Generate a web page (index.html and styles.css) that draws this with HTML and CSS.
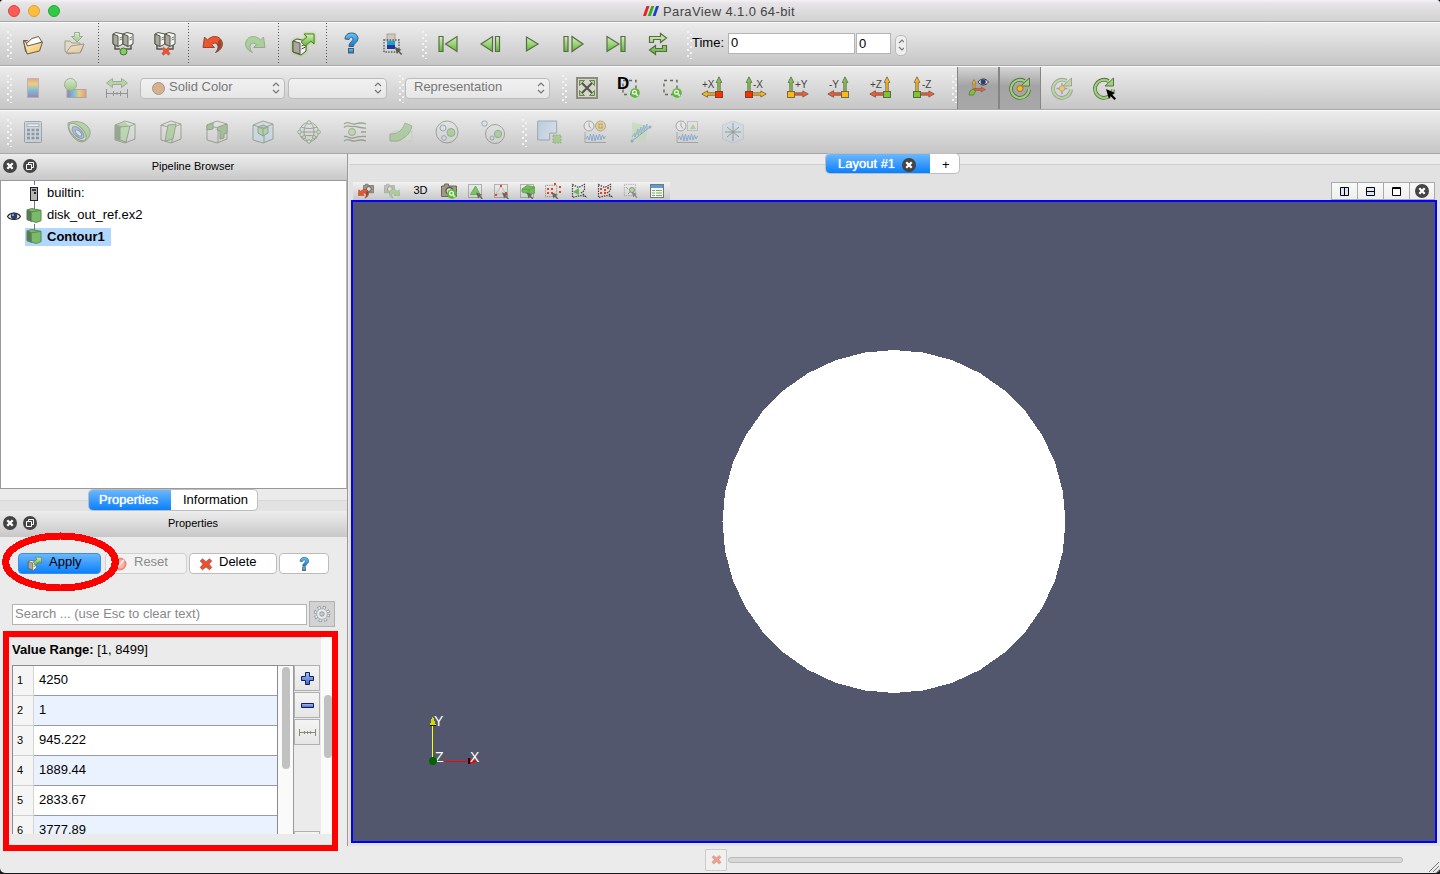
FILE: index.html
```html
<!DOCTYPE html>
<html lang="en">
<head>
<meta charset="utf-8">
<title>ParaView 4.1.0 64-bit</title>
<link rel="stylesheet" href="styles.css">
</head>
<body>
<svg class="defs" width="0" height="0">
  <defs>
    <linearGradient id="gGreen" x1="0" y1="0" x2="0" y2="1"><stop offset="0" stop-color="#d3f0bd"/><stop offset="1" stop-color="#5fb92f"/></linearGradient>
    <linearGradient id="gRain" x1="0" y1="0" x2="0" y2="1"><stop offset="0" stop-color="#f2603a"/><stop offset=".3" stop-color="#f8c72d"/><stop offset=".6" stop-color="#2ba7d8"/><stop offset="1" stop-color="#5c38a8"/></linearGradient>
    <linearGradient id="gRainH" x1="0" y1="0" x2="1" y2="0"><stop offset="0" stop-color="#4a30a0"/><stop offset=".35" stop-color="#2ba7d8"/><stop offset=".65" stop-color="#f8c72d"/><stop offset="1" stop-color="#f2603a"/></linearGradient>
    <linearGradient id="gBlue" x1="0" y1="0" x2="0" y2="1"><stop offset="0" stop-color="#62c6ff"/><stop offset="1" stop-color="#0a78d6"/></linearGradient>
    <linearGradient id="gFold" x1="0" y1="0" x2="1" y2="1"><stop offset="0" stop-color="#fff3cf"/><stop offset="1" stop-color="#f2bd5c"/></linearGradient>
    <linearGradient id="gPane" x1="0" y1="0" x2="1" y2="1"><stop offset="0" stop-color="#8fb8e0"/><stop offset="1" stop-color="#e3edf5"/></linearGradient>
    <linearGradient id="gPlus" x1="0" y1="0" x2="0" y2="1"><stop offset="0" stop-color="#a9c4f3"/><stop offset="1" stop-color="#4468c0"/></linearGradient>
    <symbol id="folder" viewBox="0 0 24 24"><path d="M2.500 8.500h4l2 2 11 1-1 7-12 3-2-2z" fill="#e8c585" stroke="#6a604a"/><path d="M5 12l6-5.500 6.500-2L21 10l-13 5z" fill="#fff" stroke="#6a604a"/><path d="M2.500 9l2 .500 2 4.500 15-4-3 9-12.500 3z" fill="url(#gFold)" stroke="#6a604a"/></symbol>
    <symbol id="folderSave" viewBox="0 0 24 24"><path d="M2 9h5l2 2 8 0 0 2 4-1-3 8-13 2-3-3z" fill="#ecd9b5" stroke="#6a604a"/><path d="M3 21l5-7 13-2-4 9z" fill="url(#gFold)" stroke="#6a604a"/><path d="M11.500 .500h5v4h3l-5.500 5.500-5.500-5.500h3z" fill="url(#gGreen)" stroke="#5a7a4a"/></symbol>
    <symbol id="servers" viewBox="0 0 24 24"><path d="M4 12v6h5M20 12v6h-5" fill="none" stroke="#55564a" stroke-width="1.500"/><g stroke="#55564a"><path d="M2 3l3-1.500 7 1.500v10l-5 2.500-5-2.500z" fill="#f4f4f2"/><path d="M2 3l5 2v10.500l-5-2.500z" fill="#a8a89c"/><path d="M12 3l4-1.500 6 1.500v10l-5 2.500-5-2.500z" fill="#f4f4f2"/><path d="M12 3l5 2v10.500l-5-2.500z" fill="#a8a89c"/><path d="M8.500 7l2.500-1M8.500 9l2.500-1M18.500 7l2.500-1M18.500 9l2.500-1" stroke="#555" stroke-width=".8"/></g></symbol>
    <symbol id="undo" viewBox="0 0 24 24"><path d="M2 15.500L3.500 5l3 3c4-4.500 10-4.500 13-1 4 5 1.500 11-5 13.500 2.500-3 3.500-6 1.500-8.500-1.500-1.500-3.500-1-5.500.500l3 3z" fill="#f0532d" stroke="#8b4a36"/><path d="M18.500 7c4 4 2 10.500-4 13.500 2.500-3 3.500-6 1.500-8.500z" fill="#4d4038" opacity=".55"/></symbol>
    <symbol id="redo" viewBox="0 0 24 24"><path d="M22 15.500L20.500 5l-3 3c-4-4.500-10-4.500-13-1-4 5-1.500 11 5 13.500C7 17.500 6 14.500 8 12c1.500-1.500 3.500-1 5.500.500l-3 3z" fill="#7cc65a" stroke="#5a7a4a"/></symbol>
    <symbol id="help" viewBox="0 0 24 24"><path d="M6 8c0-4 3-6 6.500-6C16 2 19 4 19 7.500c0 4-4.500 4.500-4.500 8h-4.500c0-5 4-5 4-7.500 0-2.500-3.500-2.500-4 .500z" fill="url(#gBlue)" stroke="#4a5a62"/><rect x="9.500" y="17.500" width="5" height="4.500" fill="url(#gBlue)" stroke="#4a5a62"/></symbol>
    <symbol id="cross" viewBox="0 0 24 24"><path d="M6 3l6 5 6-5 4 4-5 5 5 6-4 4-6-5-6 5-4-4 5-6-5-5z" fill="#ee5131" stroke="#8b3a26"/></symbol>
    <symbol id="cursor" viewBox="0 0 12 12"><path d="M1 1l9 4-3 1.500 4 4-1.500 1.500-4-4L4 11z"/></symbol>
    <symbol id="up" viewBox="0 0 10 22"><path d="M3.500 21V8H1.500L5 1l3.500 7H6.500v13z" stroke="#6a6a4e"/></symbol>
    <symbol id="rightArr" viewBox="0 0 22 10"><path d="M1 3.500h13V1l7 4-7 4V6.500H1z" stroke="#6a5a4a"/></symbol>
    <symbol id="leftArr" viewBox="0 0 22 10"><path d="M21 3.500H8V1L1 5l7 4V6.500h13z" stroke="#6a5a4a"/></symbol>
    <symbol id="wire" viewBox="0 0 24 24"><path d="M2 5l10-4 10 3v15l-10 4L2 20zM2 5l11 3 9-4M13 8v15" fill="none" stroke="#5c6a50"/></symbol>
    <symbol id="rotate" viewBox="0 0 24 24"><path d="M16.500 5A9 9 0 1 0 21 13.500" fill="none" stroke="#5f7048" stroke-width="3.800"/><path d="M21.500 2v8h-8.500z" fill="#9bd37a" stroke="#5f7048"/><path d="M16.800 5.300A9 9 0 1 0 21 13" fill="none" stroke="#9bd37a" stroke-width="2"/></symbol>
    <symbol id="close" viewBox="0 0 14 14"><circle cx="7" cy="7" r="7" fill="#444"/><path d="M4.300 4.300l5.400 5.400M9.700 4.300l-5.400 5.400" stroke="#fff" stroke-width="2.300"/></symbol>
    <symbol id="float" viewBox="0 0 14 14"><circle cx="7" cy="7" r="7" fill="#444"/><path d="M5.500 5.500v-2h5v5h-2M3.500 5.500h5v5h-5z" fill="none" stroke="#fff"/></symbol>
    <symbol id="cube" viewBox="0 0 16 16"><path d="M.500 2l5-1.500 10 2v11l-5 2-10-3z" fill="#79bb68" stroke="#5b8450"/><path d="M.500 2l5 2v11l-5-2.500z" fill="#587a54"/><path d="M.500 2l5 2 10-1.500" fill="none" stroke="#5b8450"/></symbol>
    <symbol id="gmag" viewBox="0 0 10 10"><circle cx="5" cy="5" r="4.800" fill="#5cba38"/><circle cx="4.500" cy="4.300" r="1.900" fill="none" stroke="#fff" stroke-width="1.200"/><path d="M6 6l2 2" stroke="#fff" stroke-width="1.300"/></symbol>
    <symbol id="dash" viewBox="0 0 16 16"><rect x="1.500" y="1.500" width="13" height="13" fill="none" stroke="#77786a" stroke-dasharray="1 1"/></symbol>
    <symbol id="cam" viewBox="0 0 16 16"><path d="M.500 3h3V1h4v2h8v10.500H.500z" fill="#9c9a84" stroke="#6a685a"/><circle cx="8.500" cy="8" r="3.500" fill="#ddd" stroke="#5a584a" stroke-width="1.300"/></symbol>
    <symbol id="wave" viewBox="0 0 24 12"><path d="M2 0v10.500h21" fill="none" stroke="#7a7a70"/><path d="M3 7l1.500-3L6 8l1.500-6L9 9l1.500-7L12 9l1.500-6L15 8l1.500-6L18 8l1.500-5L21 7l1.500-3" fill="none" stroke="#3a84c8"/></symbol>
    <symbol id="clock" viewBox="0 0 12 12"><circle cx="6" cy="6" r="5" fill="#eee" stroke="#6a6a60"/><path d="M6 2.500V6l2 2.500" fill="none" stroke="#6a6a60"/></symbol>
    <symbol id="spin" viewBox="0 0 8 12"><path d="M1 4l3-3 3 3M1 8l3 3 3-3" fill="none" stroke="#777" stroke-width="1.200"/></symbol>
    <symbol id="applyBox" viewBox="0 0 24 24"><path d="M2 9l4-2 9 2v10l-5 4-8-3z" fill="#f2f2ee" stroke="#55564a"/><path d="M2 9l7 2v11l-7-2z" fill="#a8a89c" stroke="#55564a"/><path d="M10.500 14l4-2M10.500 17l4-2" stroke="#444"/><path d="M10 10l6-5-3-3h10v10l-3-3-6 5z" fill="url(#gGreen)" stroke="#5a7a3a"/></symbol>
  </defs>
</svg>

<div class="window">
  <header class="titlebar">
    <div class="lights"><i class="light red"></i><i class="light yellow"></i><i class="light green"></i></div>
    <div class="title"><svg width="16" height="12" viewBox="0 0 16 12"><path d="M0 11L3.500 1H6.500L3 11z" fill="#e8202a"/><path d="M4.800 11L8.300 1H11.300L7.800 11z" fill="#2fae1e"/><path d="M9.600 11L13.100 1H16L12.500 11z" fill="#1c3fd0"/></svg><span>ParaView 4.1.0 64-bit</span></div>
  </header>

  <div class="toolbar">
    <i class="grip"></i>
    <div class="cell"><svg class="ic"><use href="#folder"/></svg></div>
    <div class="cell off"><svg class="ic"><use href="#folderSave"/></svg></div>
    <i class="sep"></i>
    <div class="cell"><svg class="ic" viewBox="0 0 24 24"><use href="#servers" y="-1"/><circle cx="12.500" cy="19.500" r="3.500" fill="#7fd05c" stroke="#4c6a3e"/></svg></div>
    <div class="cell"><svg class="ic" viewBox="0 0 24 24"><use href="#servers" y="-1"/><use href="#cross" x="8" y="14" width="10" height="10"/></svg></div>
    <i class="sep"></i>
    <div class="cell"><svg class="ic"><use href="#undo"/></svg></div>
    <div class="cell off"><svg class="ic"><use href="#redo"/></svg></div>
    <i class="sep"></i>
    <div class="cell"><svg class="ic glow"><use href="#applyBox"/></svg></div>
    <i class="sep"></i>
    <div class="cell"><svg class="ic" viewBox="0 0 24 24"><use href="#help" y="-1"/></svg></div>
    <div class="cell"><svg class="ic" viewBox="0 0 24 24"><rect x="6" y="2" width="8" height="7" fill="#d3c8bc" stroke="#aaa094"/><rect x="6" y="9" width="8" height="8" fill="#15a6d0"/><rect x="6" y="13" width="8" height="4" fill="#28349c"/><path d="M3 8h15v12H3z" fill="none" stroke="#555" stroke-width="1.400" stroke-dasharray="1.400 1.400"/><use href="#cursor" x="13" y="14" width="9" height="9" fill="#5a5a4c"/></svg></div>
    <i class="grip mid"></i>
    <div class="cell"><svg class="ic play" viewBox="0 0 24 24"><path d="M3 4.500h4v15H3zM21 4.500v15L9.500 12z"/></svg></div>
    <div class="cell"><svg class="ic play" viewBox="0 0 24 24"><path d="M17.500 4.500h4v15h-4zM14.500 4.500v15L3 12z"/></svg></div>
    <div class="cell"><svg class="ic play" viewBox="0 0 24 24"><path d="M6.500 5v14L18 12z"/></svg></div>
    <div class="cell"><svg class="ic play" viewBox="0 0 24 24"><path d="M2 4.500h4v15H2zM10 4.500v15L21 12z"/></svg></div>
    <div class="cell"><svg class="ic play" viewBox="0 0 24 24"><path d="M17 4.500h4v15h-4zM3 4.500v15L15 12z"/></svg></div>
    <div class="cell"><svg class="ic play" viewBox="0 0 24 24"><path d="M3.500 10.500V4.500h11v-3l6 4.500-6 4.500v-3h-7v3zM20.500 13.500v6h-11v3l-6-4.500 6-4.500v3h7v-3z"/></svg></div>
    <i class="grip time-grip"></i>
    <span class="lbl">Time:</span>
    <div class="field f1">0</div><div class="field f2">0</div>
    <div class="stepper"><svg width="8" height="14"><use href="#spin" width="8" height="14"/></svg></div>
  </div>

  <div class="toolbar">
    <i class="grip"></i>
    <div class="cell off"><svg class="ic" viewBox="0 0 24 24"><rect x="6.500" y="2.500" width="11" height="19" fill="url(#gRain)" stroke="#a08a80"/></svg></div>
    <div class="cell off"><svg class="ic" viewBox="0 0 24 24"><rect x="4" y="13.500" width="19" height="8" fill="url(#gRainH)" stroke="#8a7a70"/><circle cx="7.500" cy="8.500" r="6" fill="url(#gGreen)" stroke="#66785a"/></svg></div>
    <div class="cell off"><svg class="ic" viewBox="0 0 24 24"><path d="M1.500 7l6-4.500v3h9v-3l6 4.500-6 4.500v-3h-9v3z" fill="#8dd06c" stroke="#5e7a4c"/><path d="M1.500 13v9M22.500 13v9M1 17.500h22M8.500 15v5M15.500 15v5M12 16v3" stroke="#555" fill="none"/></svg></div>
    <div class="combo c1"><i class="dot"></i><span>Solid Color</span><svg width="8" height="12"><use href="#spin"/></svg></div>
    <div class="combo c2"><span></span><svg width="8" height="12"><use href="#spin"/></svg></div>
    <i class="grip rep-grip"></i>
    <div class="combo c3"><span>Representation</span><svg width="8" height="12"><use href="#spin"/></svg></div>
    <i class="grip cam-grip"></i>
    <div class="cell"><svg class="ic" viewBox="0 0 24 24"><rect x="2" y="2" width="20" height="20" fill="#d6d6cc" stroke="#8c8c80" stroke-width="2"/><path d="M7 7l10 10M17 7L7 17" stroke="#55584a" stroke-width="2.200"/><path d="M4.500 4.500h5l-5 5zM19.500 4.500v5l-5-5zM4.500 19.500v-5l5 5zM19.500 19.500h-5l5-5z" fill="#a5d884" stroke="#5a6a4a" stroke-width=".8"/></svg></div>
    <div class="cell"><svg class="ic" viewBox="0 0 24 24"><path d="M6 4.500h13v14H6z" fill="none" stroke="#666a58" stroke-width="1.400" stroke-dasharray="3 3"/><text x="0" y="13" class="dlabel">D</text><use href="#gmag" x="13" y="12" width="10" height="10"/></svg></div>
    <div class="cell"><svg class="ic" viewBox="0 0 24 24"><path d="M5 4.500h13v14H5z" fill="none" stroke="#666a58" stroke-width="1.400" stroke-dasharray="3 3"/><use href="#gmag" x="13" y="12" width="10" height="10"/></svg></div>
    <div class="cell"><svg class="ic" viewBox="0 0 24 24"><text x="1" y="12" class="ax">+X</text><use href="#up" x="13" y="0" width="10" height="18" fill="#7cc452"/><use href="#leftArr" x="0" y="13" width="18" height="10" fill="#fbb81c"/><rect x="14.500" y="15.500" width="7" height="6" fill="#fb3000" stroke="#7a4030"/></svg></div>
    <div class="cell"><svg class="ic" viewBox="0 0 24 24"><text x="10" y="12" class="ax">-X</text><use href="#up" x="1" y="0" width="10" height="18" fill="#7cc452"/><use href="#rightArr" x="7" y="13" width="17" height="10" fill="#fbb81c"/><rect x="2.500" y="15.500" width="7" height="6" fill="#fb3000" stroke="#7a4030"/></svg></div>
    <div class="cell"><svg class="ic" viewBox="0 0 24 24"><text x="10" y="12" class="ax">+Y</text><use href="#up" x="1" y="0" width="10" height="18" fill="#7cc452"/><use href="#rightArr" x="7" y="13" width="17" height="10" fill="#fb5a30"/><rect x="2.500" y="15.500" width="7" height="6" fill="#fbb81c" stroke="#7a6a40"/></svg></div>
    <div class="cell"><svg class="ic" viewBox="0 0 24 24"><text x="2" y="12" class="ax">-Y</text><use href="#up" x="13" y="0" width="10" height="18" fill="#7cc452"/><use href="#leftArr" x="0" y="13" width="18" height="10" fill="#fb5a30"/><rect x="14.500" y="15.500" width="7" height="6" fill="#fbb81c" stroke="#7a6a40"/></svg></div>
    <div class="cell"><svg class="ic" viewBox="0 0 24 24"><text x="1" y="12" class="ax">+Z</text><use href="#up" x="13" y="0" width="10" height="18" fill="#fbb81c"/><use href="#leftArr" x="0" y="13" width="18" height="10" fill="#fb5a30"/><rect x="14.500" y="15.500" width="7" height="6" fill="#7cc432" stroke="#5a6a40"/></svg></div>
    <div class="cell"><svg class="ic" viewBox="0 0 24 24"><text x="11" y="12" class="ax">-Z</text><use href="#up" x="1" y="0" width="10" height="18" fill="#fbb81c"/><use href="#rightArr" x="7" y="13" width="17" height="10" fill="#fb5a30"/><rect x="2.500" y="15.500" width="7" height="6" fill="#7cc432" stroke="#5a6a40"/></svg></div>
    <i class="grip orb-grip"></i>
    <div class="cell on"><svg class="ic" viewBox="0 0 24 24"><use href="#up" x="4" y="3" width="8" height="13" fill="#fbb81c"/><use href="#rightArr" x="7" y="10" width="13" height="7" fill="#fb5a30"/><path d="M7.500 13l-3.500 2-1 4h4.500l2-3.500z" fill="#7cc432" stroke="#5a6a40" stroke-width=".7"/><path d="M12 6c3-4 7.500-4 10.500 0-3 4-7.500 4-10.500 0z" fill="#dde4f0" stroke="#333"/><circle cx="17.200" cy="5.800" r="2.600" fill="#29406e"/></svg></div>
    <div class="cell on"><svg class="ic" viewBox="0 0 24 24"><use href="#rotate"/><circle cx="12" cy="12.500" r="3" fill="#fbb81c" stroke="#9a7a2a"/></svg></div>
    <div class="cell off"><svg class="ic" viewBox="0 0 24 24"><use href="#rotate"/><path d="M12 7v11M6.500 12.500h11" stroke="#666" stroke-width="1.500"/><circle cx="12" cy="12.500" r="2.800" fill="#fbb81c" stroke="#9a7a2a"/></svg></div>
    <div class="cell"><svg class="ic" viewBox="0 0 24 24"><use href="#rotate"/><use href="#cursor" x="13" y="12" width="12" height="12"/></svg></div>
  </div>

  <div class="toolbar wide">
    <i class="grip"></i>
    <div class="cell off"><svg class="ic" viewBox="0 0 24 24"><rect x="3.500" y="1.500" width="17" height="21" rx="1" fill="#bcd0e2" stroke="#5d6a78"/><rect x="6" y="4" width="12" height="2.500" fill="#fff" stroke="#5d6a78" stroke-width=".8"/><path d="M6 10h3M10.500 10h3M15 10h3M6 14h3M10.500 14h3M15 14h3M6 18h3M10.500 18h3M15 18h3" stroke="#4d5a68" stroke-width="2.400"/></svg></div>
    <div class="cell off"><svg class="ic" viewBox="0 0 24 24"><path d="M1 3c9-4 20 0 22 8 1 6-4 11-9 11C8 21 0 12 1 3z" fill="#8cc676" stroke="#55704a"/><ellipse cx="10.500" cy="12" rx="11" ry="5.500" transform="rotate(45 10.500 12)" fill="#cfe4bd" stroke="#55704a"/><ellipse cx="11" cy="12.500" rx="7.500" ry="3.800" transform="rotate(45 11 12.500)" fill="#7ba4dc" stroke="#4a6080"/><ellipse cx="11.500" cy="13" rx="4" ry="2" transform="rotate(45 11.500 13)" fill="#d6e3f0" stroke="#4a6080"/></svg></div>
    <div class="cell off"><svg class="ic" viewBox="0 0 24 24"><path d="M2 5l10-3 5 5-4 15L2 19z" fill="#8cc676"/><path d="M2 5l5 2v14l-5-2z" fill="#557a48"/><use href="#wire"/><path d="M7 7l10-1-4 16-6-2z" fill="#9fd58a" stroke="#55704a"/></svg></div>
    <div class="cell off"><svg class="ic" viewBox="0 0 24 24"><use href="#wire"/><path d="M9 5l8-1-3 15-8 2z" fill="#8cc676" stroke="#55704a"/></svg></div>
    <div class="cell off"><svg class="ic" viewBox="0 0 24 24"><use href="#wire"/><path d="M2 5l6-2v6l-6 1zM13 7l9-3v9l-3 1v4l-4 1v-8l-3-1z" fill="#6ca658" stroke="#4b6a3e"/></svg></div>
    <div class="cell off"><svg class="ic" viewBox="0 0 24 24"><path d="M2 5l10-4 10 3v15l-10 4-10-3z" fill="#bdd8ee"/><use href="#wire"/><path d="M7 7l5-2 5 2v6l-5 3-5-3zM7 7l5 2 5-2M12 9v7" fill="#8cc676" stroke="#4b6a3e"/></svg></div>
    <div class="cell off"><svg class="ic" viewBox="0 0 24 24"><g fill="none" stroke="#5c6a50"><circle cx="12" cy="12" r="9.500"/><ellipse cx="12" cy="12" rx="5" ry="9.500"/><path d="M2 12h20M4 7c4 2 12 2 16 0M4 17c4-2 12-2 16 0"/></g><g fill="#c9efb5" stroke="#5c7a50"><circle cx="12" cy="2.500" r="1.800"/><circle cx="12" cy="21.500" r="1.800"/><circle cx="2.500" cy="12" r="1.800"/><circle cx="21.500" cy="12" r="1.800"/><circle cx="7" cy="17" r="1.500"/><circle cx="17" cy="17" r="1.500"/></g></svg></div>
    <div class="cell off"><svg class="ic" viewBox="0 0 24 24"><path d="M1 4c4-4 7 1 11 0s6-2 11 0M1 7.500c4-4 6 0 9-1s7 2 13 1.500M1 16.500c4-1 5 2.500 9 1.500s6-2 13-1.500M1 21c5-4 7 1 11 0s6-2 11 0M18 12h5" fill="none" stroke="#5c6a50" stroke-width="1.300"/><circle cx="9" cy="12" r="3.500" fill="#a5d884" stroke="#5c7a50"/></svg></div>
    <div class="cell off"><svg class="ic" viewBox="0 0 24 24"><path d="M1 14l5-3h17v10H1z" fill="#d0dcc8" stroke="#a8b8a0" stroke-width=".6"/><path d="M1 14c8 0 12-3 15-11l7 3c-2 9-9 13-14 15H1z" fill="#86c070" stroke="#66885a"/></svg></div>
    <div class="cell off"><svg class="ic" viewBox="0 0 24 24"><circle cx="12" cy="12" r="11" fill="none" stroke="#5c6a50"/><circle cx="16" cy="12.500" r="4" fill="#7dc663" stroke="#5c7a50"/><circle cx="8" cy="8" r="3" fill="#d5e2ed" stroke="#60707c"/><circle cx="9" cy="18" r="2.300" fill="#d5e2ed" stroke="#60707c"/></svg></div>
    <div class="cell off"><svg class="ic" viewBox="0 0 24 24"><circle cx="14" cy="14" r="9.500" fill="none" stroke="#5c6a50"/><circle cx="17" cy="14" r="3.700" fill="#7dc663" stroke="#5c7a50"/><circle cx="3.500" cy="3.500" r="2.700" fill="#d5e2ed" stroke="#60707c"/><circle cx="11" cy="18" r="2" fill="#d5e2ed" stroke="#60707c"/></svg></div>
    <i class="grip data-grip"></i>
    <div class="cell off pane-ic"><svg class="ic" viewBox="0 0 24 24"><path d="M.700 1h19v12h-7v7H.700z" fill="url(#gPane)" stroke="#5f7488"/><rect x="16" y="15" width="8" height="8" fill="#7cc452" stroke="#55704a" stroke-dasharray="1.500 1.500"/></svg></div>
    <div class="cell off"><svg class="ic" viewBox="0 0 24 24"><use href="#clock" x="0" y="0" width="12" height="12"/><circle cx="17.500" cy="6" r="5" fill="#f9c032" stroke="#777050"/><path d="M15 4h5M15 8h5M16 4v4M19 4v4" stroke="#777050"/><use href="#wave" y="12" width="24" height="12"/></svg></div>
    <div class="cell off"><svg class="ic" viewBox="0 0 24 24"><path d="M3 2l16 4-2 15L3 19z" fill="#b7dba5"/><path d="M3 21L21 7" stroke="#4070a8"/><path d="M3 17l3-4 0 4 3-8 0 6 3-8 0 7 3-9 0 6 3-7 0 5" fill="none" stroke="#3a84c8" stroke-width=".9"/><circle cx="3" cy="21" r="1.500" fill="#3a84c8"/><circle cx="21" cy="7" r="1.500" fill="#3a84c8"/></svg></div>
    <div class="cell off"><svg class="ic" viewBox="0 0 24 24"><use href="#clock" x="0" y="0" width="12" height="12"/><path d="M12.500 1.500h10v9h-10z" fill="none" stroke="#667" stroke-dasharray="1 1"/><path d="M15 9l3-5 3 5z" fill="#7cc452"/><use href="#wave" y="12" width="24" height="12"/></svg></div>
    <div class="cell off dim"><svg class="ic" viewBox="0 0 24 24"><path d="M1.500 5l10.500-4 10.500 4v14L12 23 1.500 19z" fill="#bdd4e6" stroke="#9aa8b4"/><path d="M12 3v18M4 12h16M6 7l12 10M18 7L6 17" stroke="#222"/></svg></div>
  </div>

  <main class="body">
    <aside class="left">
      <div class="dock"><svg class="b14"><use href="#close"/></svg><svg class="b14"><use href="#float"/></svg><h2>Pipeline Browser</h2></div>
      <div class="tree">
        <div class="node"><span class="eye"></span><svg class="srv" viewBox="0 0 16 22"><path d="M8.500 0v4M8.500 20v2" stroke="#777"/><rect x="4.500" y="6.500" width="7" height="13" fill="#b5b5b5" stroke="#222"/><path d="M6 9h4" stroke="#111" stroke-width="1.500"/><rect x="8" y="11" width="2" height="2" fill="#222"/></svg><span class="name">builtin:</span></div>
        <div class="node"><span class="eye"><svg width="14" height="10" viewBox="0 0 14 10"><path d="M.500 5.500C3 1 11 1 13.500 5.500 11 9.500 3 9.500.500 5.500z" fill="#e6e9f0" stroke="#222" stroke-width="1.200"/><circle cx="7" cy="5" r="3.200" fill="#2b3f66"/><circle cx="6" cy="4" r="1" fill="#a9bde0"/></svg></span><svg class="srv" viewBox="0 0 16 22"><path d="M8.500 0v6" stroke="#777"/><use href="#cube" y="5" width="16" height="15"/></svg><span class="name">disk_out_ref.ex2</span></div>
        <div class="node sel"><span class="eye"></span><div class="hl"><svg class="srv" viewBox="0 0 16 22"><path d="M8.500 0v6" stroke="#777"/><use href="#cube" y="5" width="16" height="15"/></svg><span class="name">Contour1</span></div></div>
      </div>
      <div class="tabs"><div class="pill"><b class="active">Properties</b><b>Information</b></div></div>
      <div class="dock"><svg class="b14"><use href="#close"/></svg><svg class="b14"><use href="#float"/></svg><h2>Properties</h2></div>
      <div class="buttons">
        <div class="btn primary"><svg width="15" height="15"><use href="#applyBox"/></svg><span>Apply</span></div>
        <div class="btn disabled"><svg width="14" height="14" viewBox="0 0 14 14"><circle cx="7" cy="7" r="5.500" fill="#f9b5a5" stroke="#ee8a75" stroke-width="2"/><path d="M3 11l8-8" stroke="#f6ebe8" stroke-width="2"/></svg><span>Reset</span></div>
        <div class="btn del"><svg width="14" height="14"><use href="#cross"/></svg><span>Delete</span></div>
        <div class="btn q"><svg width="16" height="16"><use href="#help"/></svg></div>
      </div>
      <div class="searchrow"><div class="search">Search ... (use Esc to clear text)</div><div class="gear"><svg width="18" height="18" viewBox="0 0 18 18"><circle cx="9" cy="9" r="6.500" fill="none" stroke="#8c9498" stroke-width="3.400" stroke-dasharray="2.900 2.205"/><circle cx="9" cy="9" r="6.500" fill="none" stroke="#e5e9eb" stroke-width="2" stroke-dasharray="1.700 3.405" stroke-dashoffset="-.600"/><circle cx="9" cy="9" r="5.300" fill="#e5e9eb" stroke="#a2a9ad" stroke-width=".7"/><circle cx="9" cy="9" r="2.200" fill="#ccc" stroke="#92999d"/></svg></div></div>
      <div class="props">
        <div class="pcol">
          <p class="range"><b>Value Range:</b> [1, 8499]</p>
          <div class="listrow">
            <div class="table">
              <div class="row"><i>1</i><span>4250</span></div>
              <div class="row alt"><i>2</i><span>1</span></div>
              <div class="row"><i>3</i><span>945.222</span></div>
              <div class="row alt"><i>4</i><span>1889.44</span></div>
              <div class="row"><i>5</i><span>2833.67</span></div>
              <div class="row alt"><i>6</i><span>3777.89</span></div>
            </div>
            <div class="track"><i class="thumb t1"></i></div>
            <div class="side">
              <div class="sq"><svg width="15" height="15" viewBox="0 0 15 15"><path d="M5.500 1.500h4v4h4v4h-4v4h-4v-4h-4v-4h4z" fill="url(#gPlus)" stroke="#0f1e66"/></svg></div>
              <div class="sq"><svg width="15" height="15" viewBox="0 0 15 15"><path d="M1.500 5.500h12v4h-12z" fill="url(#gPlus)" stroke="#0f1e66"/></svg></div>
              <div class="sq"><svg width="17" height="9" viewBox="0 0 17 9"><path d="M.500 1v7M16.500 1v7M1 4.500h15M5.500 3v3M8.500 3v3M11.500 3v3" stroke="#8a8a78" fill="none"/></svg></div>
              <div class="sq last"></div>
            </div>
          </div>
        </div>
        <div class="track outer"><i class="thumb t2"></i></div>
      </div>
    </aside>

    <section class="right">
      <div class="vtabs"><div class="pill"><b class="active">Layout #1<svg class="b14"><use href="#close"/></svg></b><b class="add">+</b></div></div>
      <div class="pane">
        <div class="viewbar">
          <div class="vtools">
            <div><svg class="vi" viewBox="0 0 16 16"><use href="#cam" x="5" y="0" width="11" height="12"/><use href="#undo" x="-1" y="4" width="13" height="13"/></svg></div>
            <div class="off"><svg class="vi" viewBox="0 0 16 16"><use href="#cam" x="0" y="0" width="11" height="12"/><use href="#redo" x="4" y="4" width="13" height="13"/></svg></div>
            <div class="d3">3D</div>
            <div><svg class="vi" viewBox="0 0 16 16"><use href="#cam"/><use href="#gmag" x="6" y="6" width="10" height="10"/></svg></div>
            <div><svg class="vi" viewBox="0 0 16 16"><use href="#dash"/><path d="M3.500 11.500l5-8.500 4.500 8.500z" fill="#7cc66a" stroke="#6caa5c"/><use href="#cursor" x="8.500" y="8.500" width="8" height="8" fill="#66695a"/></svg></div>
            <div><svg class="vi" viewBox="0 0 16 16"><use href="#dash"/><path d="M3 11l5-8 5 8z" fill="none" stroke="#bbb"/><path d="M7 2h2v2H7zM2 11h2v2H2zM12 9h2v2h-2z" fill="#f0401c"/><use href="#cursor" x="8.500" y="8.500" width="8" height="8" fill="#66695a"/></svg></div>
            <div><svg class="vi" viewBox="0 0 16 16"><use href="#dash"/><path d="M3 6l5-3.500 8 1.500v6l-6 1-7-2z" fill="#72bd5a" stroke="#5a9a4a" stroke-width=".8"/><path d="M3 6l7 .500v5M10 6.500l6-2" fill="none" stroke="#5a9a4a" stroke-width=".8"/><use href="#cursor" x="7" y="8.500" width="8" height="8" fill="#66695a"/></svg></div>
            <div><svg class="vi" viewBox="0 0 16 16"><use href="#dash" x="-1" width="14" height="16"/><path d="M2 5h2v2H2zM6 5h2v2H6zM2 9h2v2H2zM6 9h2v2H6zM9 0h2v2H9zM14 3h2v2h-2zM14 8h2v2h-2z" fill="#f0401c"/><use href="#cursor" x="6" y="8.500" width="8" height="8" fill="#66695a"/></svg></div>
            <div><svg class="vi" viewBox="0 0 16 16"><path d="M1.500 1.500l6 3 6-3v6l-3 2 4 4-5-1-8 2z" fill="none" stroke="#444" stroke-width="1.200" stroke-dasharray="1.500 1"/><path d="M2 9l6-4v7z" fill="#6cb455"/></svg></div>
            <div><svg class="vi" viewBox="0 0 16 16"><path d="M1.500 1.500l6 3 6-3v6l-3 2 4 4-5-1-8 2z" fill="none" stroke="#444" stroke-width="1.200" stroke-dasharray="1.500 1"/><path d="M3 5h2v2H3zM7 6h2v2H7zM3 9h2v2H3zM7 9h2v2H7zM10 4h2v2h-2z" fill="#f0401c"/></svg></div>
            <div class="off2"><svg class="vi" viewBox="0 0 16 16"><use href="#dash" width="14" height="14"/><path d="M3 4l2 2M5 11l2-2" stroke="#777"/><circle cx="9" cy="7" r="2.500" fill="#a5d884" stroke="#667"/><use href="#cursor" x="8" y="8" width="7" height="7" fill="#66695a"/></svg></div>
            <div><svg class="vi" viewBox="0 0 16 16"><rect x="1.500" y="1.500" width="13" height="13" fill="#f4f8f0" stroke="#777"/><path d="M2 3.500h12" stroke="#5c9ad8" stroke-width="3"/><path d="M3 7.500h3M3 10h3M3 12.500h3M7 7.500h6M7 10h6M7 12.500h6" stroke="#7aa868" stroke-width="1.200"/></svg></div>
          </div>
          <div class="vctl">
            <div><svg width="9" height="9"><path d="M.500.500h8v8h-8zM4.500.500v8" fill="#dde4fa" stroke="#000"/></svg></div>
            <div><svg width="9" height="9"><path d="M.500.500h8v8h-8zM.500 4.500h8" fill="#dde4fa" stroke="#000"/></svg></div>
            <div><svg width="9" height="9"><path d="M.500.500h8v8h-8zM.500 1.500h8" fill="#fff" stroke="#000"/></svg></div>
            <div><svg class="b14"><use href="#close"/></svg></div>
          </div>
        </div>
        <div class="view">
          <svg width="1082" height="639" viewBox="353 202 1082 639">
            <g transform="translate(894 521.500)"><polygon fill="#fff" shape-rendering="crispEdges" points="171.500,0 168.900,29.800 161.200,58.700 148.500,85.800 131.400,110.200 110.200,131.400 85.800,148.500 58.700,161.200 29.800,168.900 0,171.500 -29.800,168.900 -58.700,161.200 -85.800,148.500 -110.200,131.400 -131.400,110.200 -148.500,85.800 -161.200,58.700 -168.900,29.800 -171.500,0 -168.900,-29.800 -161.200,-58.700 -148.500,-85.800 -131.400,-110.200 -110.200,-131.400 -85.800,-148.500 -58.700,-161.200 -29.800,-168.900 0,-171.500 29.800,-168.900 58.700,-161.200 85.800,-148.500 110.200,-131.400 131.400,-110.200 148.500,-85.800 161.200,-58.700 168.900,-29.800"/></g>
            <g shape-rendering="crispEdges"><path d="M432.500 724v37" stroke="#ff0"/><path d="M432 717h1l3 8h-6z" fill="#d8d800"/><path d="M430 725.500h6" stroke="#111"/><path d="M444 761.500h25" stroke="#f00"/><path d="M468 758h2v6h-2z" fill="#111"/><path d="M470 758l7 3.500-7 2.500z" fill="#e00"/></g>
            <g class="axl"><text x="434" y="726">Y</text><text x="435" y="761.500">Z</text><text x="470" y="762">X</text></g>
            <circle cx="433" cy="761" r="4" fill="#006400"/>
          </svg>
        </div>
      </div>
    </section>
  </main>

  <footer class="status">
    <div class="abort"><svg width="11" height="11"><use href="#cross"/></svg></div>
    <div class="progress"></div>
    <svg class="resize" width="12" height="12"><path d="M1 11L11 1M5 11l6-6M9 11l2-2" stroke="#777"/></svg>
  </footer>
</div>
<svg class="mark" width="119" height="60"><ellipse cx="59.500" cy="30" rx="54.800" ry="26" fill="none" stroke="#f00" stroke-width="7" shape-rendering="crispEdges"/></svg>
<div class="markbox"></div>
</body>
</html>
```
FILE: styles.css
```css
* { box-sizing: border-box; }
body { margin: 0; width: 1440px; height: 874px; overflow: hidden; background: #17171c; font: 13px "Liberation Sans", Arial, sans-serif; color: #000; }
.defs { position: absolute; }
svg { display: block; flex: none; }
.window { height: 873px; display: flex; flex-direction: column; background: #ebebeb; border-radius: 4px 4px 5px 5px; overflow: hidden; }

.titlebar { height: 22px; flex: none; display: grid; grid-template-columns: 638px 1fr; align-items: center; background: linear-gradient(#f4f2f4, #e7e4e7 15%, #d2d2d2); border-bottom: 1px solid #a8a8a8; }
.lights { display: flex; gap: 8px; padding-left: 8px; }
.light { width: 12px; height: 12px; border-radius: 50%; }
.red { background: #fc5b57; border: 1px solid #e0443e; }
.yellow { background: #fdbd3f; border: 1px solid #dea133; }
.green { background: #34c84a; border: 1px solid #1dad2b; }
.title { display: flex; align-items: center; gap: 4px; padding: 1px 0 0 5px; color: #444; letter-spacing: .38px; white-space: nowrap; }

.toolbar { height: 44px; flex: none; display: flex; align-items: center; border-top: 1px solid #fafafa; border-bottom: 1px solid #a8a8a8; background: linear-gradient(#ececec, #c6c6c6); }
.grip { flex: none; width: 5px; height: 29px; margin: 0 0 0 7px; background: linear-gradient(#f2f2f2, #f2f2f2) 0 0 / 0 0, conic-gradient(#f4f4f4 0 0) 0 0 / 0 0, repeating-linear-gradient(transparent 0 1px, #f3f3f3 1px 3px, transparent 3px 6px) 0 0 / 2px 100% no-repeat, repeating-linear-gradient(transparent 0 4px, #f3f3f3 4px 6px) 3px 0 / 2px 100% no-repeat; }
.cell { flex: none; width: 42px; height: 42px; display: flex; align-items: center; justify-content: center; }
.ic { width: 24px; height: 24px; overflow: visible; }
.wide .cell { width: 46px; }
.wide .grip:first-child { margin-right: -2px; }
.off { opacity: .5; }
.dim .ic { opacity: .7; }
.off2 { opacity: .7; }
.on { background: linear-gradient(#d4d4d4, #a4a4a4 45%, #a8a8a8); border-left: 1px solid #858585; border-right: 1px solid #858585; }
.sep { flex: none; width: 6px; height: 42px; background: repeating-linear-gradient(#555 0 1px, transparent 1px 3px) 2px 0 / 1px 100% no-repeat; }
.glow { filter: drop-shadow(0 0 1px #7fd000); }
.play path { fill: url(#gGreen); stroke: #5a6a48; stroke-width: 1.200; }
.mid { margin: 0 0 0 8px; }
.time-grip { margin-left: 8px; }
.lbl { width: 36px; padding-bottom: 3px; white-space: nowrap; }
.field { height: 21px; background: #fff; border: 1px solid #b4b4b4; line-height: 18px; padding-left: 2px; margin-bottom: 1px; }
.f1 { width: 127px; }
.f2 { width: 35px; margin-left: 1px; line-height: 20px; }
.stepper { margin: 2px 0 0 4px; width: 12px; height: 21px; border: 1px solid #bbb; border-radius: 5px; background: #eee; display: flex; align-items: center; justify-content: center; }
.stepper svg { width: 6px; }
.combo { flex: none; height: 21px; display: flex; align-items: center; border: 1px solid #bcbcbc; border-radius: 4px; background: linear-gradient(#f1f1f1, #e6e6e6); color: #777; padding: 0 4px 0 8px; }
.combo span { flex: 1; padding-bottom: 4px; white-space: nowrap; }
.dot { width: 13px; height: 13px; border-radius: 50%; background: #d9b08c; border: 1px solid #999; margin: 1px 4px 0 3px; }
.c1 { width: 145px; margin-left: 2px; }
.c2 { width: 99px; margin-left: 3px; }
.c3 { width: 145px; }
.rep-grip { margin: 0 1px 0 12px; }
.cam-grip { margin: 0 -1px 0 12px; }
.orb-grip { margin: 0 0 0 8px; }
.data-grip { margin: 0 -1px 0 6px; }
.pane-ic { padding-right: 1px; }
.dlabel { font: bold 17px "Liberation Sans", sans-serif; }
.ax { font: 10px "Liberation Sans", sans-serif; fill: #444; }

.body { flex: none; height: 692px; display: grid; grid-template-columns: 348px 1092px; }
.left { border-right: 1px solid #999; display: flex; flex-direction: column; overflow: hidden; }
.dock { height: 26px; flex: none; display: flex; align-items: center; gap: 6px; padding: 0 0 2px 3px; background: linear-gradient(#ededed, #c8c8c8); }
.dock h2 { flex: 1; margin: 0; padding: 0 4px 0 0; text-align: center; font-size: 11px; font-weight: normal; }
.b14 { width: 14px; height: 14px; }
.tree { height: 309px; flex: none; background: #fff; border: 1px solid #999; border-right-color: #bbb; }
.node { height: 22.300px; display: flex; align-items: center; }
.eye { width: 24px; padding: 3px 0 0 6px; flex: none; }
.srv { width: 16px; height: 22px; margin-left: 1px; }
.name { margin-left: 5px; }
.hl { display: flex; align-items: center; height: 18px; width: 86px; background: #b2d7ff; font-weight: bold; }
.hl .srv { margin-top: -3px; }
.hl .name { padding-bottom: 1px; }

.tabs { height: 22px; flex: none; display: flex; padding-left: 89px; background: linear-gradient(#ebebeb 11px, #d0d0d0 11px, #e2e2e2 12px); }
.pill { display: flex; height: 20px; border-radius: 4px; overflow: hidden; background: #fff; box-shadow: 0 0 0 1px #bdbdbd; }
.pill b { font-weight: normal; line-height: 19px; padding: 0 9px 0 12px; }
.pill .active { color: #fff; background: linear-gradient(#6cb7fb, #0a80fd); padding: 0 12px 0 10px; text-shadow: 0 0 1px #fff; }
.tabs .pill { margin: 1px 0 0 0; width: 168px; }
.tabs b { flex: 1; white-space: nowrap; }
.tabs .active { flex: 0 0 82px; }

.buttons { display: flex; padding: 16px 0 0 18px; height: 66px; flex: none; }
.btn { height: 21px; display: flex; align-items: center; border: 1px solid #bcbcbc; border-radius: 4px; background: #fff; }
.btn span { padding-bottom: 4px; }
.primary { width: 83px; margin-right: 4px; padding-left: 8px; gap: 7px; background: linear-gradient(#6cb7fb, #0a80fd); border-color: #3a8fe8; }
.disabled { width: 82px; margin-right: 2px; padding-left: 7px; gap: 7px; background: #f2f2f2; border-color: #d0d0d0; color: #8a8a8a; }
.del { width: 88px; margin-right: 2px; padding-left: 9px; gap: 6px; }
.q { width: 50px; justify-content: center; }
.searchrow { display: flex; align-items: center; gap: 2px; padding-left: 12px; height: 22px; flex: none; }
.search { width: 295px; height: 21px; border: 1px solid #b4b4b4; background: #fff; color: #888; line-height: 17px; padding-left: 2px; }
.gear { flex: none; width: 26px; height: 26px; background: #d2d2d2; border: 1px solid #b0b0b0; display: flex; align-items: center; justify-content: center; }
.props { display: flex; margin: 12px 0 0 12px; height: 197px; flex: none; overflow: hidden; }
.pcol { width: 309px; border-top: 1px solid #ccc; }
.range { margin: 0; height: 27px; line-height: 24px; font-size: 13px; }
.listrow { display: flex; height: 169px; overflow: hidden; }
.table { width: 266px; border: solid #8c8c8c; border-width: 1px 1px 0 1px; overflow: hidden; }
.row { display: flex; height: 30px; }
.row i { width: 21px; flex: none; font: 11px/29px "Liberation Sans", sans-serif; padding-left: 4px; background: #f5f5f5; border-right: 1px solid #d4d4d4; border-bottom: 1px solid #d0d0d0; }
.row span { flex: 1; background: #fff; border-bottom: 1px solid #999ba2; padding-left: 5px; line-height: 27px; }
.alt span { background: #ebf2ff; }
.track { width: 15px; background: #fafafa; border-top: 1px solid #999; display: flex; justify-content: center; }
.thumb { width: 8px; border-radius: 4px; background: #c1c1c1; }
.t1 { height: 102px; margin-top: 1px; }
.side { width: 27px; display: flex; flex-direction: column; gap: 1px; border-left: 1px solid #999; }
.sq { width: 26px; height: 26px; flex: none; border: 1px solid #b0b0b0; background: linear-gradient(#f4f4f4, #e6e6e6); display: flex; align-items: center; justify-content: center; }
.last { margin-top: 85px; }
.outer { border: 0; width: 12px; }
.t2 { height: 63px; margin-top: 58px; margin-left: 2px; }

.right { display: flex; flex-direction: column; }
.vtabs { height: 28px; flex: none; padding-left: 478px; margin-left: 1px; background: linear-gradient(#ebebeb 10px, #d0d0d0 10px, #d0d0d0 11px, #e2e2e2 11px); }
.vtabs .pill { width: 133px; height: 19px; margin-left: -1px; }
.vtabs .active { display: flex; align-items: center; gap: 7px; width: 104px; flex: none; padding: 0 0 0 12px; white-space: nowrap; }
.vtabs .active svg { margin-top: 2px; }
.vtabs .add { line-height: 21px; padding: 0 0 0 12px; }
.pane { flex: 1; background: #e2e2e2; margin-left: 1px; padding: 0 3px 3px 2px; display: flex; flex-direction: column; }
.viewbar { height: 18px; display: flex; justify-content: space-between; padding: 0 2px; }
.vtools { display: flex; width: 317px; background: linear-gradient(#f2f2f2, #c8c8c8); }
.vtools > div { width: 26px; display: flex; align-items: center; justify-content: center; }
.vtools .d3 { width: 31px; font-size: 11px; padding-bottom: 2px; }
.vi { width: 16px; height: 16px; }
.vctl { display: flex; }
.vctl div { width: 26px; border: 1px solid #aaa; border-right-width: 0; background: linear-gradient(#fafafa, #eee); display: flex; align-items: center; justify-content: center; }
.vctl div:last-child { border-right-width: 1px; }
.view { height: 643px; border: 2px solid #00f; background: #52576e; }
.axl text { font: 14px "Liberation Sans", sans-serif; fill: #fff; }

.status { flex: 1; display: flex; align-items: center; padding-left: 705px; }
.abort { width: 22px; height: 22px; border: 1px solid #ccc; background: #f0f0f0; display: flex; align-items: center; justify-content: center; }
.abort svg { opacity: .5; }
.progress { width: 675px; height: 6px; margin-left: 1px; border: 1px solid #bbb; border-radius: 3px; background: #d8d8d8; }
.resize { margin: 14px 0 0 25px; }

/* annotation overlays */
.mark { position: absolute; left: 1px; top: 532px; }
.markbox { position: absolute; left: 3px; top: 631px; width: 335px; height: 220px; border: 6px solid #f00; }
```
